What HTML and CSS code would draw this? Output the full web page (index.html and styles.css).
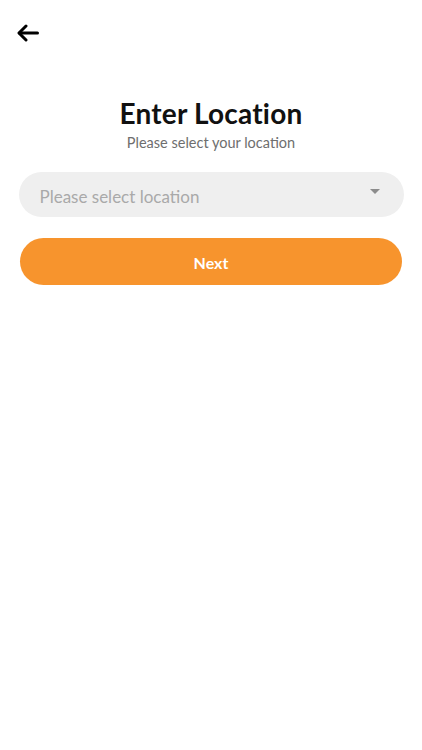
FILE: index.html
```html
<!DOCTYPE html>
<html lang="en">
<head>
<meta charset="utf-8">
<title>Enter Location</title>
<link rel="stylesheet" href="styles.css">
</head>
<body>
<div class="screen">
  <header class="topbar">
    <button class="back" aria-label="Back">
      <svg width="22" height="18" viewBox="0 0 22 18" fill="none" stroke="#000" stroke-width="3" stroke-linecap="round" stroke-linejoin="round">
        <path d="M20.5 9H2.5"/>
        <path d="M9 2L2 9L9 16"/>
      </svg>
    </button>
  </header>
  <main class="content">
    <h1 class="title">Enter Location</h1>
    <p class="subtitle">Please select your location</p>
    <div class="select">
      <span class="placeholder">Please select location</span>
      <span class="caret"></span>
    </div>
    <button class="next">Next</button>
  </main>
</div>
</body>
</html>
```
FILE: styles.css
```css
* { box-sizing: border-box; }
html, body { margin: 0; padding: 0; background: #fff; }
body { font-family: Lato, "Noto Sans", "Liberation Sans", sans-serif; }
.screen { width: 422px; min-height: 750px; }
.topbar { padding: 24px 0 0 17px; height: 60px; }
.back { border: 0; background: none; padding: 0; width: 24px; height: 18px; display: flex; align-items: center; cursor: pointer; }
.content { display: flex; flex-direction: column; align-items: center; padding: 37px 18px 0 18px; }
.title { margin: 0; font-size: 28px; font-weight: 700; color: #111; line-height: 32px; letter-spacing: 0.2px; }
.subtitle { margin: 5px 0 0; font-size: 14.5px; color: #6e6e6e; line-height: 18px; }
.select { margin-top: 20px; width: 385px; height: 45px; border-radius: 23px; background: #efefef; display: flex; align-items: center; justify-content: space-between; padding: 3px 24px 0 21px; }
.placeholder { font-size: 17px; color: #a9a9a9; }
.caret { width: 0; height: 0; border-left: 5.5px solid transparent; border-right: 5.5px solid transparent; border-top: 5px solid #8c8c8c; margin-top: -10px; }
.next { margin-top: 21px; width: 382px; height: 47px; border: 0; border-radius: 24px; background: #f7942d; color: #fff; font-family: inherit; font-size: 16px; font-weight: 700; padding: 2px 0 0; cursor: pointer; }
```
